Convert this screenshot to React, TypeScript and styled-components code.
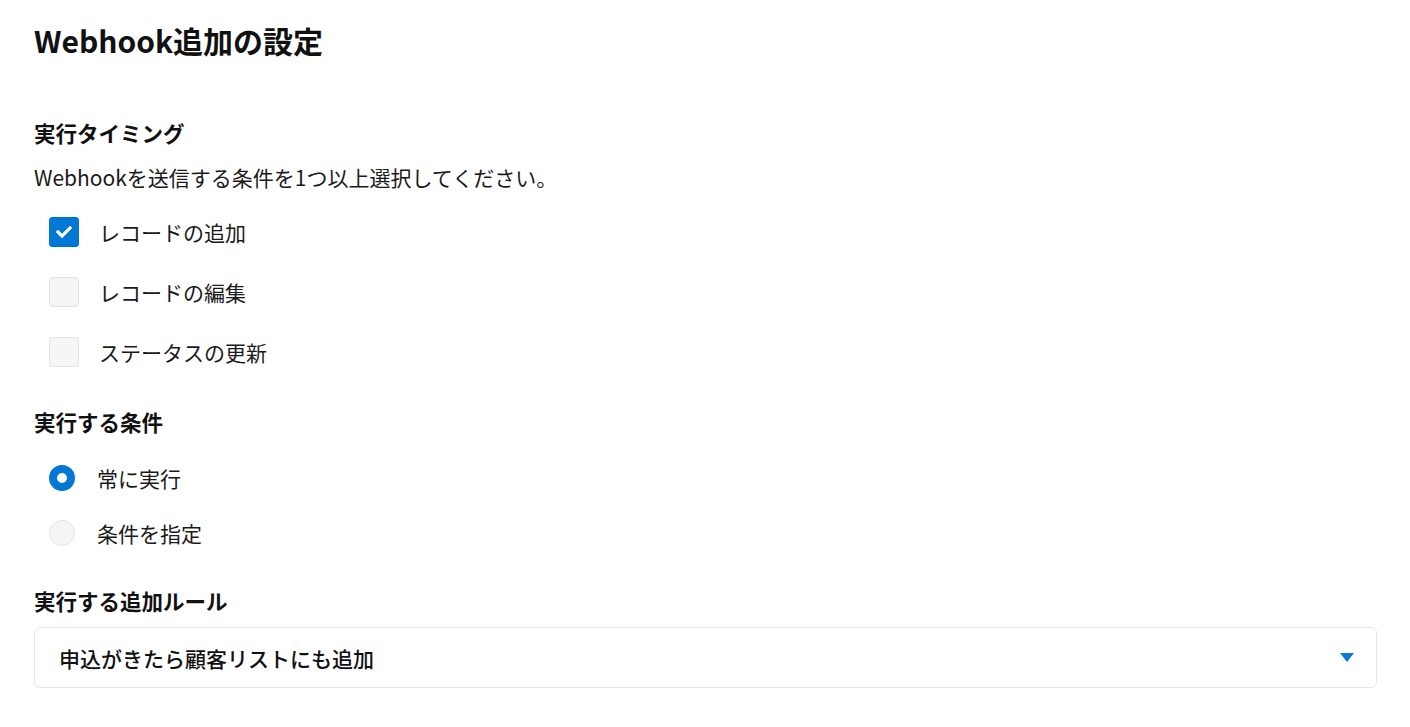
import styled, { createGlobalStyle } from 'styled-components';
import { FaCheck } from 'react-icons/fa';

const GlobalStyle = createGlobalStyle`
  html, body {
    margin: 0;
    padding: 0;
    background: #ffffff;
  }
  body {
    font-family: "Noto Sans CJK JP", "Noto Sans", sans-serif;
    color: #1a1a1a;
  }
`;

const Page = styled.div`
  padding: 20px 33px 0 34px;
  display: flex;
  flex-direction: column;
`;

const Title = styled.h1`
  margin: 0;
  font-size: 30px;
  line-height: 40px;
  font-weight: 700;
  color: #111;
`;

const SectionTitle = styled.h2<{ $top: number }>`
  margin: ${(p) => p.$top}px 0 0;
  font-size: 21.5px;
  line-height: 26px;
  font-weight: 700;
  color: #111;
`;

const Description = styled.p`
  margin: 18px 0 0;
  font-size: 21px;
  line-height: 26px;
`;

const OptionList = styled.div<{ $top: number; $gap: number }>`
  margin-top: ${(p) => p.$top}px;
  padding-left: 15px;
  display: flex;
  flex-direction: column;
  gap: ${(p) => p.$gap}px;
`;

const Option = styled.label`
  display: flex;
  align-items: center;
  font-size: 21px;
  line-height: 28px;
  min-height: 30px;
  cursor: pointer;
`;

const CheckBox = styled.span<{ $checked: boolean }>`
  width: 30px;
  height: 30px;
  box-sizing: border-box;
  border-radius: 3px;
  margin-right: 20px;
  display: flex;
  align-items: center;
  justify-content: center;
  color: #ffffff;
  background: ${(p) => (p.$checked ? '#0277d3' : '#f5f5f5')};
  border: 1px solid ${(p) => (p.$checked ? '#0277d3' : '#e3e3e3')};
`;

const Radio = styled.span<{ $checked: boolean }>`
  width: 26px;
  height: 26px;
  box-sizing: border-box;
  border-radius: 50%;
  margin-right: 22px;
  background: ${(p) => (p.$checked ? '#ffffff' : '#f5f5f5')};
  border: ${(p) => (p.$checked ? '8px solid #0277d3' : '1px solid #e3e3e3')};
`;

const Select = styled.div`
  margin-top: 13px;
  height: 61px;
  box-sizing: border-box;
  border: 1px solid #e6e6e6;
  border-radius: 6px;
  padding: 0 22px 0 24px;
  display: flex;
  align-items: center;
  justify-content: space-between;
  font-size: 21px;
  font-weight: 500;
  color: #111;
`;

const Caret = styled.span`
  width: 0;
  height: 0;
  border-left: 7px solid transparent;
  border-right: 7px solid transparent;
  border-top: 9px solid #0a7ad4;
`;

const timings = [
  { label: 'レコードの追加', checked: true },
  { label: 'レコードの編集', checked: false },
  { label: 'ステータスの更新', checked: false },
];

const conditions = [
  { label: '常に実行', checked: true },
  { label: '条件を指定', checked: false },
];

export default function App() {
  return (
    <>
      <GlobalStyle />
      <Page>
        <Title>Webhook追加の設定</Title>

        <SectionTitle $top={60}>実行タイミング</SectionTitle>
        <Description>Webhookを送信する条件を1つ以上選択してください。</Description>
        <OptionList $top={27} $gap={30}>
          {timings.map((t) => (
            <Option key={t.label}>
              <CheckBox $checked={t.checked}>{t.checked && <FaCheck size={16} />}</CheckBox>
              {t.label}
            </Option>
          ))}
        </OptionList>

        <SectionTitle $top={42}>実行する条件</SectionTitle>
        <OptionList $top={28} $gap={25}>
          {conditions.map((c) => (
            <Option key={c.label}>
              <Radio $checked={c.checked} />
              {c.label}
            </Option>
          ))}
        </OptionList>

        <SectionTitle $top={40}>実行する追加ルール</SectionTitle>
        <Select>
          <span>申込がきたら顧客リストにも追加</span>
          <Caret />
        </Select>
      </Page>
    </>
  );
}
